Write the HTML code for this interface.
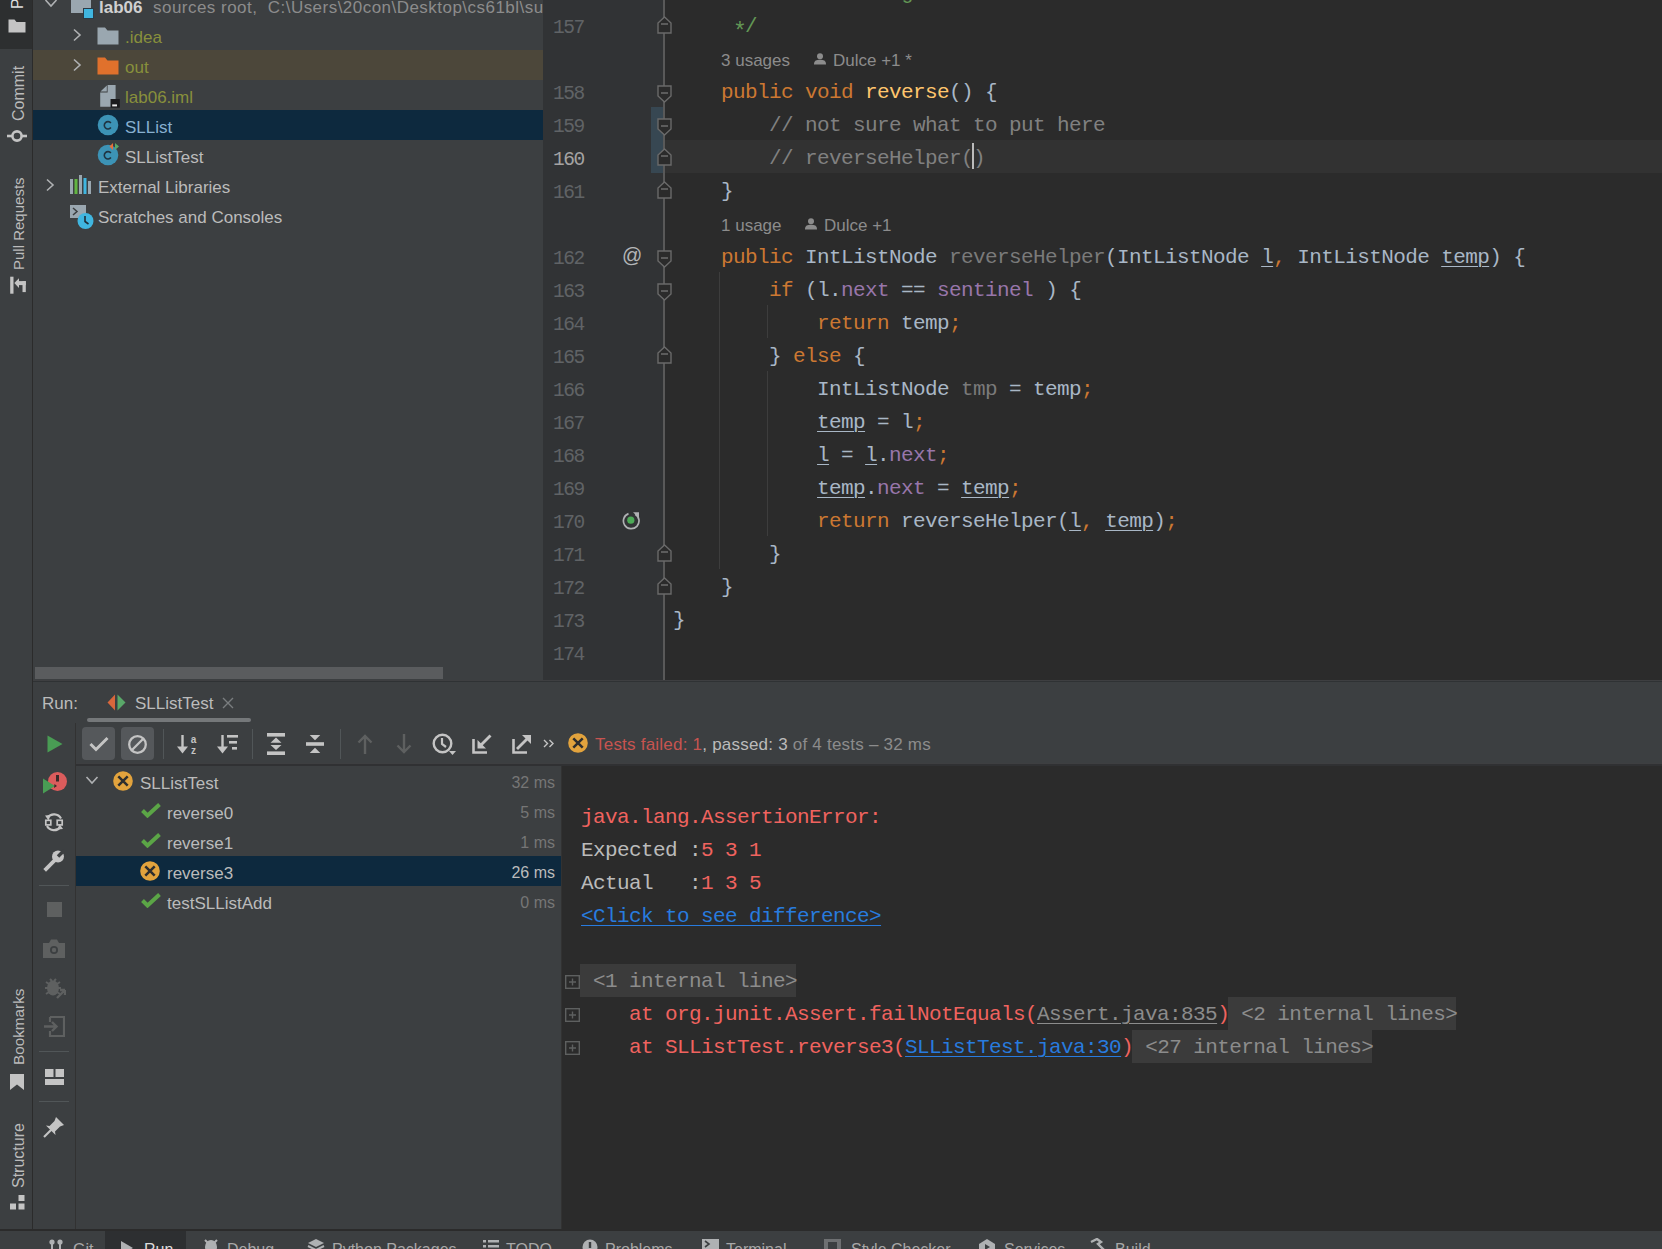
<!DOCTYPE html><html><head><meta charset="utf-8"><style>
*{margin:0;padding:0;box-sizing:border-box}
html,body{width:1662px;height:1249px;overflow:hidden;background:#3C3F41}
body{position:relative;font-family:"Liberation Sans",sans-serif;}
.abs{position:absolute}
.ui{position:absolute;font-family:"Liberation Sans",sans-serif;font-size:17px;white-space:pre;line-height:20px}
.code{position:absolute;font-family:"Liberation Mono",monospace;font-size:21px;letter-spacing:-0.6px;white-space:pre;line-height:33px;height:33px;color:#A9B7C6}
.ln{position:absolute;font-family:"Liberation Mono",monospace;font-size:19.5px;letter-spacing:-1.5px;white-space:pre;line-height:33px;color:#606366;}
.ast{position:relative;top:7px;font-size:23px;letter-spacing:-1.8px}
.u{text-decoration:underline;text-underline-offset:3px;text-decoration-thickness:1px}
.vt{position:absolute;transform-origin:0 0;transform:rotate(-90deg);font-family:"Liberation Sans",sans-serif;font-size:16px;white-space:pre;color:#BBBBBB;line-height:18px}
</style></head><body>
<div class="abs" style="left:0;top:0;width:32px;height:1229px;background:#3C3F41"></div>
<div class="abs" style="left:0;top:0;width:32px;height:49px;background:#2D2F30"></div>
<div class="abs" style="left:32px;top:0;width:1px;height:1229px;background:#2B2B2B"></div>
<div class="vt" style="left:9px;top:9px;font-size:16px;color:#DDDDDD">Project</div>
<svg class="abs" style="left:8px;top:19px" width="18" height="14" viewBox="0 0 18 14"><path d="M0.5 0.5 H6.5 L8.5 3 H17.5 V13.5 H0.5 Z" fill="#C4C4C4"/></svg>
<div class="vt" style="left:10px;top:120.5px;font-size:16px;color:#BBBBBB">Commit</div>
<svg class="abs" style="left:7px;top:129px" width="20" height="14" viewBox="0 0 20 14"><path d="M0 7 H20" stroke="#C4C4C4" stroke-width="2.6"/><circle cx="10" cy="7" r="4.6" fill="#3C3F41" stroke="#C4C4C4" stroke-width="2.6"/></svg>
<div class="vt" style="left:10px;top:269.5px;font-size:15px;color:#BBBBBB">Pull Requests</div>
<svg class="abs" style="left:10px;top:276px" width="16" height="18" viewBox="0 0 16 18"><rect x="0.2" y="0.7" width="3.3" height="17" fill="#C4C4C4"/><path d="M4.3 7.1 L9 2.3 L9 11.9 Z" fill="#C4C4C4"/><rect x="8.5" y="5.1" width="7.3" height="4" fill="#C4C4C4"/><rect x="12.5" y="5.1" width="3.3" height="11" fill="#C4C4C4"/></svg>
<div class="vt" style="left:10px;top:1065px;font-size:15.3px;color:#BBBBBB">Bookmarks</div>
<svg class="abs" style="left:10px;top:1074px" width="14" height="16" viewBox="0 0 14 16"><path d="M0 0 H14 V16 L7 10.5 L0 16 Z" fill="#C4C4C4"/></svg>
<div class="vt" style="left:10px;top:1187.5px;font-size:16px;color:#BBBBBB">Structure</div>
<svg class="abs" style="left:10px;top:1195px" width="15" height="15" viewBox="0 0 15 15"><rect x="8.5" y="0" width="6" height="6" fill="#C4C4C4"/><rect x="0" y="8.5" width="6" height="6" fill="#C4C4C4"/><rect x="8.5" y="8.5" width="6" height="6" fill="#C4C4C4"/></svg>
<div class="abs" style="left:33px;top:0;width:510px;height:680px;background:#3C3F41"></div>
<div class="abs" style="left:33px;top:50px;width:510px;height:30px;background:#4C473A"></div>
<div class="abs" style="left:33px;top:110px;width:510px;height:30px;background:#0D293E"></div>
<div class="abs" style="left:35px;top:667px;width:408px;height:12px;background:#5A5C5E"></div>
<svg class="abs" style="left:44px;top:-2px" width="14" height="10" viewBox="0 0 14 10"><path d="M1.5 2 L7 8 L12.5 2" fill="none" stroke="#AFB1B3" stroke-width="1.6"/></svg>
<div class="abs" style="left:71px;top:-3px;width:20px;height:16px;background:#9AA7B0"></div>
<div class="abs" style="left:83px;top:8px;width:11px;height:11px;background:#40B6E0;border:1.5px solid #2B3A45"></div>
<div class="ui" style="left:99px;top:-2px;color:#D0D0D0;font-weight:bold">lab06</div>
<div class="ui" style="left:153px;top:-2px;color:#8C8C8C;letter-spacing:0.47px;width:390px;overflow:hidden">sources root,  C:\Users\20con\Desktop\cs61bl\su</div>
<svg class="abs" style="left:72px;top:28px" width="10" height="14" viewBox="0 0 10 14"><path d="M2 1.5 L8 7 L2 12.5" fill="none" stroke="#AFB1B3" stroke-width="1.6"/></svg>
<svg class="abs" style="left:97px;top:27px" width="22" height="18" viewBox="0 0 22 18"><path d="M0.5 0.5 H8 L10.5 3.5 H21.5 V17.5 H0.5 Z" fill="#9AA7B0"/></svg>
<div class="ui" style="left:125px;top:28px;color:#88903C;">.idea</div>
<svg class="abs" style="left:72px;top:58px" width="10" height="14" viewBox="0 0 10 14"><path d="M2 1.5 L8 7 L2 12.5" fill="none" stroke="#AFB1B3" stroke-width="1.6"/></svg>
<svg class="abs" style="left:97px;top:57px" width="22" height="18" viewBox="0 0 22 18"><path d="M0.5 0.5 H8 L10.5 3.5 H21.5 V17.5 H0.5 Z" fill="#E0712C"/></svg>
<div class="ui" style="left:125px;top:58px;color:#88903C;">out</div>
<svg class="abs" style="left:100px;top:85px" width="21" height="23" viewBox="0 0 21 23"><path d="M0.5 6.5 L6.8 0.5 V6.5 Z" fill="#9AA7B0"/><path d="M7.6 0 H15.6 V14 H10.7 V21.7 H0.2 V7.4 H7.6 Z" fill="#9AA7B0"/><rect x="10.7" y="14" width="9.1" height="8.7" fill="#1B1B1D"/><rect x="12.2" y="19.4" width="4.8" height="2" fill="#E6E6E6"/></svg>
<div class="ui" style="left:125px;top:88px;color:#88903C;">lab06.iml</div>
<svg class="abs" style="left:97px;top:114px" width="24" height="22" viewBox="0 0 24 22"><circle cx="11" cy="11" r="10.3" fill="#3C93B6"/><path d="M13.9 9 A3.7 3.7 0 1 0 13.9 13.6" fill="none" stroke="#1F3442" stroke-width="1.6"/></svg>
<div class="ui" style="left:125px;top:118px;color:#88B0D0;">SLList</div>
<svg class="abs" style="left:97px;top:140px" width="24" height="26" viewBox="0 -4 24 26"><circle cx="11" cy="11" r="10.3" fill="#3C93B6"/><path d="M13.9 9 A3.7 3.7 0 1 0 13.9 13.6" fill="none" stroke="#1F3442" stroke-width="1.6"/><path d="M16 -1 L16 6 L12.5 2.5 Z" fill="#E8703A"/><path d="M18 -1 L18 6 L22 2.5 Z" fill="#59A869"/></svg>
<div class="ui" style="left:125px;top:148px;color:#BBBBBB;">SLListTest</div>
<svg class="abs" style="left:45px;top:178px" width="10" height="14" viewBox="0 0 10 14"><path d="M2 1.5 L8 7 L2 12.5" fill="none" stroke="#AFB1B3" stroke-width="1.6"/></svg>
<svg class="abs" style="left:70px;top:175px" width="22" height="19" viewBox="0 0 22 19"><rect x="0" y="4" width="3" height="15" fill="#9AA7B0"/><rect x="4.5" y="4" width="3" height="15" fill="#62B543"/><rect x="9" y="0" width="3" height="19" fill="#9AA7B0"/><rect x="13.5" y="3" width="3" height="16" fill="#40B6E0"/><rect x="18" y="6" width="3" height="13" fill="#9AA7B0"/></svg>
<div class="ui" style="left:98px;top:178px;color:#BBBBBB;">External Libraries</div>
<svg class="abs" style="left:70px;top:205px" width="24" height="25" viewBox="0 0 24 25"><rect x="0" y="0" width="16" height="13" fill="#9AA7B0"/><path d="M3 3 L7 6.5 L3 10" fill="none" stroke="#3C3F41" stroke-width="1.5"/><circle cx="15.5" cy="16" r="8" fill="#40B6E0"/><path d="M15 11 L15 16.5 L18.5 19" fill="none" stroke="#1E2E38" stroke-width="1.6"/></svg>
<div class="ui" style="left:98px;top:208px;color:#BBBBBB;">Scratches and Consoles</div>
<div class="abs" style="left:543px;top:0;width:121px;height:680px;background:#313335"></div>
<div class="abs" style="left:664px;top:0;width:998px;height:680px;background:#2B2B2B"></div>
<div class="abs" style="left:664px;top:140px;width:998px;height:33px;background:#323232"></div>
<div class="abs" style="left:651px;top:107px;width:12px;height:66px;background:#374752"></div>
<div class="code" style="left:673px;top:-23px"><span style="color:#629755" class="">                   g</span></div>
<div class="ln" style="left:553px;top:12px;color:#606366">157</div>
<div class="code" style="left:673px;top:10px"><span style="color:#629755" class="">     </span><span style="color:#629755" class="ast">*</span><span style="color:#629755" class="">/</span></div>
<div class="ln" style="left:553px;top:78px;color:#606366">158</div>
<div class="code" style="left:673px;top:76px"><span style="color:#A9B7C6" class="">    </span><span style="color:#CC7832" class="">public</span><span style="color:#A9B7C6" class=""> </span><span style="color:#CC7832" class="">void</span><span style="color:#A9B7C6" class=""> </span><span style="color:#FFC66D" class="">reverse</span><span style="color:#A9B7C6" class="">() {</span></div>
<div class="ln" style="left:553px;top:111px;color:#606366">159</div>
<div class="code" style="left:673px;top:109px"><span style="color:#808080" class="">        // not sure what to put here</span></div>
<div class="ln" style="left:553px;top:144px;color:#A4A3A3">160</div>
<div class="code" style="left:673px;top:142px"><span style="color:#808080" class="">        // reverseHelper()</span></div>
<div class="ln" style="left:553px;top:177px;color:#606366">161</div>
<div class="code" style="left:673px;top:175px"><span style="color:#A9B7C6" class="">    }</span></div>
<div class="ln" style="left:553px;top:243px;color:#606366">162</div>
<div class="code" style="left:673px;top:241px"><span style="color:#A9B7C6" class="">    </span><span style="color:#CC7832" class="">public</span><span style="color:#A9B7C6" class=""> IntListNode </span><span style="color:#7A7A7A" class="">reverseHelper</span><span style="color:#A9B7C6" class="">(IntListNode </span><span style="color:#A9B7C6" class="u">l</span><span style="color:#CC7832" class="">,</span><span style="color:#A9B7C6" class=""> IntListNode </span><span style="color:#A9B7C6" class="u">temp</span><span style="color:#A9B7C6" class="">) {</span></div>
<div class="ln" style="left:553px;top:276px;color:#606366">163</div>
<div class="code" style="left:673px;top:274px"><span style="color:#A9B7C6" class="">        </span><span style="color:#CC7832" class="">if</span><span style="color:#A9B7C6" class=""> (l.</span><span style="color:#9876AA" class="">next</span><span style="color:#A9B7C6" class=""> == </span><span style="color:#9876AA" class="">sentinel</span><span style="color:#A9B7C6" class=""> ) {</span></div>
<div class="ln" style="left:553px;top:309px;color:#606366">164</div>
<div class="code" style="left:673px;top:307px"><span style="color:#A9B7C6" class="">            </span><span style="color:#CC7832" class="">return</span><span style="color:#A9B7C6" class=""> temp</span><span style="color:#CC7832" class="">;</span></div>
<div class="ln" style="left:553px;top:342px;color:#606366">165</div>
<div class="code" style="left:673px;top:340px"><span style="color:#A9B7C6" class="">        } </span><span style="color:#CC7832" class="">else</span><span style="color:#A9B7C6" class=""> {</span></div>
<div class="ln" style="left:553px;top:375px;color:#606366">166</div>
<div class="code" style="left:673px;top:373px"><span style="color:#A9B7C6" class="">            IntListNode </span><span style="color:#7A7A7A" class="">tmp</span><span style="color:#A9B7C6" class=""> = temp</span><span style="color:#CC7832" class="">;</span></div>
<div class="ln" style="left:553px;top:408px;color:#606366">167</div>
<div class="code" style="left:673px;top:406px"><span style="color:#A9B7C6" class="">            </span><span style="color:#A9B7C6" class="u">temp</span><span style="color:#A9B7C6" class=""> = l</span><span style="color:#CC7832" class="">;</span></div>
<div class="ln" style="left:553px;top:441px;color:#606366">168</div>
<div class="code" style="left:673px;top:439px"><span style="color:#A9B7C6" class="">            </span><span style="color:#A9B7C6" class="u">l</span><span style="color:#A9B7C6" class=""> = </span><span style="color:#A9B7C6" class="u">l</span><span style="color:#A9B7C6" class="">.</span><span style="color:#9876AA" class="">next</span><span style="color:#CC7832" class="">;</span></div>
<div class="ln" style="left:553px;top:474px;color:#606366">169</div>
<div class="code" style="left:673px;top:472px"><span style="color:#A9B7C6" class="">            </span><span style="color:#A9B7C6" class="u">temp</span><span style="color:#A9B7C6" class="">.</span><span style="color:#9876AA" class="">next</span><span style="color:#A9B7C6" class=""> = </span><span style="color:#A9B7C6" class="u">temp</span><span style="color:#CC7832" class="">;</span></div>
<div class="ln" style="left:553px;top:507px;color:#606366">170</div>
<div class="code" style="left:673px;top:505px"><span style="color:#A9B7C6" class="">            </span><span style="color:#CC7832" class="">return</span><span style="color:#A9B7C6" class=""> reverseHelper(</span><span style="color:#A9B7C6" class="u">l</span><span style="color:#CC7832" class="">,</span><span style="color:#A9B7C6" class=""> </span><span style="color:#A9B7C6" class="u">temp</span><span style="color:#A9B7C6" class="">)</span><span style="color:#CC7832" class="">;</span></div>
<div class="ln" style="left:553px;top:540px;color:#606366">171</div>
<div class="code" style="left:673px;top:538px"><span style="color:#A9B7C6" class="">        }</span></div>
<div class="ln" style="left:553px;top:573px;color:#606366">172</div>
<div class="code" style="left:673px;top:571px"><span style="color:#A9B7C6" class="">    }</span></div>
<div class="ln" style="left:553px;top:606px;color:#606366">173</div>
<div class="code" style="left:673px;top:604px"><span style="color:#A9B7C6" class="">}</span></div>
<div class="ln" style="left:553px;top:639px;color:#606366">174</div>
<div class="code" style="left:673px;top:637px"></div>
<div class="ui" style="left:721px;top:51px;color:#8C8C8C;font-size:17px">3 usages</div>
<svg class="abs" style="left:813px;top:53px" width="14" height="12" viewBox="0 0 14 12"><circle cx="7" cy="3.2" r="3" fill="#8C8C8C"/><path d="M1 11.5 C1 7.5 3.5 6.8 7 6.8 C10.5 6.8 13 7.5 13 11.5 Z" fill="#8C8C8C"/></svg>
<div class="ui" style="left:833px;top:51px;color:#8C8C8C;font-size:17px">Dulce +1 *</div>
<div class="ui" style="left:721px;top:216px;color:#8C8C8C;font-size:17px">1 usage</div>
<svg class="abs" style="left:804px;top:218px" width="14" height="12" viewBox="0 0 14 12"><circle cx="7" cy="3.2" r="3" fill="#8C8C8C"/><path d="M1 11.5 C1 7.5 3.5 6.8 7 6.8 C10.5 6.8 13 7.5 13 11.5 Z" fill="#8C8C8C"/></svg>
<div class="ui" style="left:824px;top:216px;color:#8C8C8C;font-size:17px">Dulce +1</div>
<div class="abs" style="left:972px;top:143px;width:2px;height:26px;background:#BBBBBB"></div>
<div class="abs" style="left:663px;top:0;width:2px;height:680px;background:#595959"></div>
<div class="abs" style="left:719px;top:272px;width:1px;height:297px;background:#3D3D3D"></div>
<div class="abs" style="left:767px;top:305px;width:1px;height:33px;background:#3D3D3D"></div>
<div class="abs" style="left:767px;top:371px;width:1px;height:165px;background:#3D3D3D"></div>
<svg class="abs" style="left:657px;top:16px" width="15" height="18" viewBox="0 0 15 18"><path d="M1 17 H14 V7 L7.5 1 L1 7 Z" fill="#2B2B2B" stroke="#6A6A6A" stroke-width="1.4"/><path d="M4 8 H11" stroke="#6A6A6A" stroke-width="1.6"/></svg>
<svg class="abs" style="left:657px;top:85px" width="15" height="18" viewBox="0 0 15 18"><path d="M1 1 H14 V11 L7.5 17 L1 11 Z" fill="#2B2B2B" stroke="#6A6A6A" stroke-width="1.4"/><path d="M4 8 H11" stroke="#6A6A6A" stroke-width="1.6"/></svg>
<svg class="abs" style="left:657px;top:118px" width="15" height="18" viewBox="0 0 15 18"><path d="M1 1 H14 V11 L7.5 17 L1 11 Z" fill="#2B2B2B" stroke="#6A6A6A" stroke-width="1.4"/><path d="M4 8 H11" stroke="#6A6A6A" stroke-width="1.6"/></svg>
<svg class="abs" style="left:657px;top:148px" width="15" height="18" viewBox="0 0 15 18"><path d="M1 17 H14 V7 L7.5 1 L1 7 Z" fill="#2B2B2B" stroke="#6A6A6A" stroke-width="1.4"/><path d="M4 8 H11" stroke="#6A6A6A" stroke-width="1.6"/></svg>
<svg class="abs" style="left:657px;top:181px" width="15" height="18" viewBox="0 0 15 18"><path d="M1 17 H14 V7 L7.5 1 L1 7 Z" fill="#2B2B2B" stroke="#6A6A6A" stroke-width="1.4"/><path d="M4 8 H11" stroke="#6A6A6A" stroke-width="1.6"/></svg>
<svg class="abs" style="left:657px;top:250px" width="15" height="18" viewBox="0 0 15 18"><path d="M1 1 H14 V11 L7.5 17 L1 11 Z" fill="#2B2B2B" stroke="#6A6A6A" stroke-width="1.4"/><path d="M4 8 H11" stroke="#6A6A6A" stroke-width="1.6"/></svg>
<svg class="abs" style="left:657px;top:283px" width="15" height="18" viewBox="0 0 15 18"><path d="M1 1 H14 V11 L7.5 17 L1 11 Z" fill="#2B2B2B" stroke="#6A6A6A" stroke-width="1.4"/><path d="M4 8 H11" stroke="#6A6A6A" stroke-width="1.6"/></svg>
<svg class="abs" style="left:657px;top:346px" width="15" height="18" viewBox="0 0 15 18"><path d="M1 17 H14 V7 L7.5 1 L1 7 Z" fill="#2B2B2B" stroke="#6A6A6A" stroke-width="1.4"/><path d="M4 8 H11" stroke="#6A6A6A" stroke-width="1.6"/></svg>
<svg class="abs" style="left:657px;top:544px" width="15" height="18" viewBox="0 0 15 18"><path d="M1 17 H14 V7 L7.5 1 L1 7 Z" fill="#2B2B2B" stroke="#6A6A6A" stroke-width="1.4"/><path d="M4 8 H11" stroke="#6A6A6A" stroke-width="1.6"/></svg>
<svg class="abs" style="left:657px;top:577px" width="15" height="18" viewBox="0 0 15 18"><path d="M1 17 H14 V7 L7.5 1 L1 7 Z" fill="#2B2B2B" stroke="#6A6A6A" stroke-width="1.4"/><path d="M4 8 H11" stroke="#6A6A6A" stroke-width="1.6"/></svg>
<div class="ui" style="left:622px;top:245px;color:#B4B6B8;font-size:20px">@</div>
<svg class="abs" style="left:622px;top:511px" width="20" height="20" viewBox="0 0 20 20"><path d="M13.2 3.2 A7.8 7.8 0 1 1 6.5 2.6" fill="none" stroke="#AFB1B3" stroke-width="1.7"/><path d="M11 1.2 L17 1.2 L17 7 Z" fill="#AFB1B3"/><circle cx="8.8" cy="9.2" r="3.6" fill="#4DAA57"/></svg>
<div class="abs" style="left:33px;top:680px;width:1629px;height:1px;background:#3E3F41"></div>
<div class="abs" style="left:33px;top:681px;width:1629px;height:1px;background:#2F3234"></div>
<div class="abs" style="left:33px;top:682px;width:1629px;height:547px;background:#3C3F41"></div>
<div class="abs" style="left:561px;top:766px;width:1101px;height:463px;background:#2B2B2B"></div>
<div class="ui" style="left:42px;top:694px;color:#BBBBBB">Run:</div>
<svg class="abs" style="left:107px;top:694px" width="19" height="17" viewBox="0 0 19 17"><path d="M8 0.5 L8 16.5 L0.5 8.5 Z" fill="#D9673C"/><path d="M10.5 0.5 L10.5 16.5 L18.5 8.5 Z" fill="#59A869"/></svg>
<div class="ui" style="left:135px;top:694px;color:#BBBBBB">SLListTest</div>
<svg class="abs" style="left:222px;top:697px" width="12" height="12" viewBox="0 0 12 12"><path d="M1 1 L11 11 M11 1 L1 11" stroke="#7A7D7F" stroke-width="1.4"/></svg>
<div class="abs" style="left:87px;top:718px;width:164px;height:4px;border-radius:2px;background:#75787A"></div>
<div class="abs" style="left:76px;top:763px;width:1586px;height:1px;background:#3E3F41"></div>
<div class="abs" style="left:76px;top:764px;width:1586px;height:2px;background:#303133"></div>
<div class="abs" style="left:75px;top:723px;width:1px;height:506px;background:#323232"></div>
<svg class="abs" style="left:47px;top:735px" width="16" height="18" viewBox="0 0 16 18"><path d="M0.5 0.5 L15.5 9 L0.5 17.5 Z" fill="#499C54"/></svg>
<svg class="abs" style="left:42px;top:771px" width="26" height="24" viewBox="0 0 26 24"><circle cx="15.5" cy="10.5" r="9.5" fill="#DB5C5C"/><rect x="14" y="4" width="3" height="6.5" fill="#3A2A2A"/><path d="M1 7.5 L13 15 L1 22.5 Z" fill="#499C54" stroke="#3C3F41" stroke-width="0"/><path d="M12.5 13 L15 15 L12 17 Z" fill="#3A2A2A"/></svg>
<svg class="abs" style="left:44px;top:811px" width="20" height="23" viewBox="0 0 20 23"><path d="M3.6 6.5 A8 8 0 0 1 17 7.5" fill="none" stroke="#C4C4C4" stroke-width="2.2"/><path d="M1 4.5 L6.5 4 L4.5 9.5 Z" fill="#C4C4C4"/><path d="M16.4 16 A8 8 0 0 1 3 15" fill="none" stroke="#C4C4C4" stroke-width="2.2"/><path d="M19 18 L13.5 18.5 L15.5 13 Z" fill="#C4C4C4"/><rect x="1.8" y="9.3" width="5" height="4.6" fill="none" stroke="#C4C4C4" stroke-width="1.7"/><rect x="13.2" y="9.3" width="5" height="4.6" fill="none" stroke="#C4C4C4" stroke-width="1.7"/></svg>
<svg class="abs" style="left:43px;top:849px" width="22" height="23" viewBox="0 0 22 23"><path d="M3 20 L12 11" stroke="#C4C4C4" stroke-width="3.8" stroke-linecap="square"/><circle cx="15" cy="7.5" r="6" fill="#C4C4C4"/><path d="M15 7.5 L22 0.5" stroke="#3C3F41" stroke-width="3.4"/></svg>
<div class="abs" style="left:39px;top:885px;width:30px;height:1px;background:#515658"></div>
<div class="abs" style="left:47px;top:902px;width:15px;height:15px;background:#5E6060"></div>
<svg class="abs" style="left:43px;top:939px" width="22" height="19" viewBox="0 0 22 19"><path d="M0 4 H6 L8 0.5 H14 L16 4 H22 V19 H0 Z" fill="#5E6060"/><circle cx="11" cy="11" r="4" fill="#3C3F41"/><circle cx="11" cy="11" r="2.2" fill="#5E6060"/></svg>
<svg class="abs" style="left:44px;top:976px" width="22" height="23" viewBox="0 0 22 23"><ellipse cx="9" cy="12" rx="6" ry="7.5" fill="#5E6060"/><path d="M2 6 L5 8 M16 6 L13 8 M1 12 H4 M14 12 H17 M2 18 L5 16 M16 18 L13 16 M6 3 L8 5 M12 3 L10 5" stroke="#5E6060" stroke-width="2"/><path d="M13 22 L21 14 M21 14 H16 M21 14 V19" stroke="#5E6060" stroke-width="2.4"/></svg>
<svg class="abs" style="left:44px;top:1016px" width="21" height="21" viewBox="0 0 21 21"><path d="M6 1 H20 V20 H6 V15 M6 6 V1" fill="none" stroke="#5E6060" stroke-width="2.2"/><path d="M0 10.5 H12 M8 6 L12.5 10.5 L8 15" fill="none" stroke="#5E6060" stroke-width="2.4"/></svg>
<div class="abs" style="left:39px;top:1051px;width:30px;height:1px;background:#515658"></div>
<svg class="abs" style="left:45px;top:1069px" width="19" height="16" viewBox="0 0 19 16"><rect x="0" y="0" width="8.5" height="8" fill="#C4C4C4"/><rect x="10.5" y="0" width="8.5" height="8" fill="#C4C4C4"/><rect x="0" y="10" width="19" height="6" fill="#C4C4C4"/></svg>
<div class="abs" style="left:39px;top:1101px;width:30px;height:1px;background:#515658"></div>
<svg class="abs" style="left:43px;top:1116px" width="22" height="22" viewBox="0 0 22 22"><path d="M1 21 L9 13" stroke="#C4C4C4" stroke-width="2.2"/><path d="M13 1 L21 9 L17 10.5 L12 15.5 L12.5 19 L3 9.5 L6.5 10 L11.5 5 Z" fill="#C4C4C4"/></svg>
<div class="abs" style="left:82px;top:727px;width:33px;height:33px;border-radius:4px;background:#55585B"></div>
<div class="abs" style="left:121px;top:727px;width:33px;height:33px;border-radius:4px;background:#55585B"></div>
<svg class="abs" style="left:89px;top:736px" width="20" height="16" viewBox="0 0 20 16"><path d="M1.5 8 L7 13.5 L18.5 2" fill="none" stroke="#C4C4C4" stroke-width="3"/></svg>
<svg class="abs" style="left:127px;top:734px" width="21" height="21" viewBox="0 0 21 21"><circle cx="10.5" cy="10.5" r="8.3" fill="none" stroke="#C4C4C4" stroke-width="2.3"/><path d="M5 16 L16 5" stroke="#C4C4C4" stroke-width="2.3"/></svg>
<div class="abs" style="left:163px;top:729px;width:1px;height:30px;background:#515658"></div>
<div class="abs" style="left:252px;top:729px;width:1px;height:30px;background:#515658"></div>
<div class="abs" style="left:340px;top:729px;width:1px;height:30px;background:#515658"></div>
<svg class="abs" style="left:177px;top:735px" width="22" height="19" viewBox="0 0 22 19"><path d="M5.5 0 V15" stroke="#C4C4C4" stroke-width="2.4"/><path d="M0 11.5 L5.5 18.5 L11 11.5 Z" fill="#C4C4C4"/><text x="16.5" y="8" font-family="Liberation Sans" font-weight="bold" font-size="10" fill="#C4C4C4" text-anchor="middle">a</text><text x="16.5" y="18.5" font-family="Liberation Sans" font-weight="bold" font-size="10" fill="#C4C4C4" text-anchor="middle">z</text></svg>
<svg class="abs" style="left:217px;top:735px" width="22" height="19" viewBox="0 0 22 19"><path d="M5.5 0 V15" stroke="#C4C4C4" stroke-width="2.4"/><path d="M0 11.5 L5.5 18.5 L11 11.5 Z" fill="#C4C4C4"/><rect x="10" y="0" width="11" height="2.6" fill="#C4C4C4"/><rect x="12" y="6" width="8" height="2.6" fill="#C4C4C4"/><rect x="15" y="12" width="5" height="2.6" fill="#C4C4C4"/></svg>
<svg class="abs" style="left:267px;top:733px" width="18" height="22" viewBox="0 0 18 22"><rect x="0" y="0" width="18" height="3.6" fill="#C4C4C4"/><rect x="0" y="18.4" width="18" height="3.6" fill="#C4C4C4"/><path d="M3.5 9.7 L9 4.6 L14.5 9.7 Z M3.5 12 L9 17 L14.5 12 Z" fill="#C4C4C4"/></svg>
<svg class="abs" style="left:306px;top:734px" width="18" height="20" viewBox="0 0 18 20"><rect x="0" y="8.2" width="18" height="3.6" fill="#C4C4C4"/><path d="M3.7 1 L9 6.2 L14.3 1 Z M3.7 19 L9 13.8 L14.3 19 Z" fill="#C4C4C4"/></svg>
<svg class="abs" style="left:357px;top:734px" width="16" height="20" viewBox="0 0 16 20"><path d="M8 2 V20 M1.5 8.5 L8 2 L14.5 8.5" fill="none" stroke="#5E6060" stroke-width="2.4"/></svg>
<svg class="abs" style="left:396px;top:734px" width="16" height="20" viewBox="0 0 16 20"><path d="M8 0 V18 M1.5 11.5 L8 18 L14.5 11.5" fill="none" stroke="#5E6060" stroke-width="2.4"/></svg>
<svg class="abs" style="left:432px;top:733px" width="25" height="24" viewBox="0 0 25 24"><circle cx="10.5" cy="10.5" r="8.8" fill="none" stroke="#C4C4C4" stroke-width="2.4"/><path d="M10 5 V11 L14 14" fill="none" stroke="#C4C4C4" stroke-width="2.2"/><path d="M17 18 H24 L20.5 22 Z" fill="#C4C4C4"/></svg>
<svg class="abs" style="left:472px;top:734px" width="20" height="20" viewBox="0 0 20 20"><path d="M1.5 5 V18.5 H15" fill="none" stroke="#C4C4C4" stroke-width="2.6"/><path d="M18.5 1.5 L8 12" stroke="#C4C4C4" stroke-width="2.8"/><path d="M5.5 6 V14.5 H14 Z" fill="#C4C4C4"/></svg>
<svg class="abs" style="left:512px;top:734px" width="20" height="20" viewBox="0 0 20 20"><path d="M1.5 5 V18.5 H15" fill="none" stroke="#C4C4C4" stroke-width="2.6"/><path d="M5 15 L15 5" stroke="#C4C4C4" stroke-width="2.8"/><path d="M10 1 H19 V10 Z" fill="#C4C4C4"/></svg>
<svg class="abs" style="left:543px;top:739px" width="12" height="9" viewBox="0 0 12 9"><path d="M1 1 L4.5 4.5 L1 8 M6.5 1 L10 4.5 L6.5 8" fill="none" stroke="#C4C4C4" stroke-width="1.4"/></svg>
<svg class="abs" style="left:568px;top:733px" width="20" height="20" viewBox="0 0 20 20"><circle cx="10" cy="10" r="9.8" fill="#E2A33D"/><path d="M5.3 5.3 L14.7 14.7 M14.7 5.3 L5.3 14.7" stroke="#2E2E2E" stroke-width="2.5"/></svg>
<div class="ui" style="left:595px;top:735px;color:#C75450;letter-spacing:0.22px">Tests failed: 1<span style="color:#BBBBBB">, passed: 3</span><span style="color:#8C8C8C"> of 4 tests &#8211; 32 ms</span></div>
<div class="abs" style="left:76px;top:856px;width:485px;height:30px;background:#0D293E"></div>
<svg class="abs" style="left:85px;top:775px" width="14" height="10" viewBox="0 0 14 10"><path d="M1.5 2 L7 8 L12.5 2" fill="none" stroke="#AFB1B3" stroke-width="1.6"/></svg>
<svg class="abs" style="left:113px;top:771px" width="20" height="20" viewBox="0 0 20 20"><circle cx="10" cy="10" r="9.8" fill="#E2A33D"/><path d="M5.3 5.3 L14.7 14.7 M14.7 5.3 L5.3 14.7" stroke="#2E2E2E" stroke-width="2.5"/></svg>
<div class="ui" style="left:140px;top:774px;color:#BBBBBB;">SLListTest</div>
<svg class="abs" style="left:141px;top:803px" width="20" height="15" viewBox="0 0 20 15"><path d="M1.5 7.5 L6.5 12.5 L18.5 1.5" fill="none" stroke="#5BA546" stroke-width="4"/></svg>
<div class="ui" style="left:167px;top:804px;color:#BBBBBB;">reverse0</div>
<svg class="abs" style="left:141px;top:833px" width="20" height="15" viewBox="0 0 20 15"><path d="M1.5 7.5 L6.5 12.5 L18.5 1.5" fill="none" stroke="#5BA546" stroke-width="4"/></svg>
<div class="ui" style="left:167px;top:834px;color:#BBBBBB;">reverse1</div>
<svg class="abs" style="left:141px;top:893px" width="20" height="15" viewBox="0 0 20 15"><path d="M1.5 7.5 L6.5 12.5 L18.5 1.5" fill="none" stroke="#5BA546" stroke-width="4"/></svg>
<div class="ui" style="left:167px;top:894px;color:#BBBBBB;">testSLListAdd</div>
<svg class="abs" style="left:140px;top:861px" width="20" height="20" viewBox="0 0 20 20"><circle cx="10" cy="10" r="9.8" fill="#E2A33D"/><path d="M5.3 5.3 L14.7 14.7 M14.7 5.3 L5.3 14.7" stroke="#2E2E2E" stroke-width="2.5"/></svg>
<div class="ui" style="left:167px;top:864px;color:#BBBBBB;">reverse3</div>
<div class="ui" style="right:1107px;top:773px;color:#767676;font-size:16px">32 ms</div>
<div class="ui" style="right:1107px;top:803px;color:#767676;font-size:16px">5 ms</div>
<div class="ui" style="right:1107px;top:833px;color:#767676;font-size:16px">1 ms</div>
<div class="ui" style="right:1107px;top:863px;color:#BBBBBB;font-size:16px">26 ms</div>
<div class="ui" style="right:1107px;top:893px;color:#767676;font-size:16px">0 ms</div>
<div class="abs" style="left:0;top:1229px;width:1662px;height:2px;background:#2B2B2B"></div>
<div class="abs" style="left:0;top:1231px;width:1662px;height:18px;background:#3C3F41"></div>
<div class="abs" style="left:580px;top:964px;width:216px;height:33px;background:#3B3B3B"></div>
<div class="abs" style="left:1228px;top:997px;width:228px;height:33px;background:#3B3B3B"></div>
<div class="abs" style="left:1132px;top:1030px;width:240px;height:33px;background:#3B3B3B"></div>
<div class="code" style="left:581px;top:801px"><span style="color:#F0635F" class="">java.lang.AssertionError:</span></div>
<div class="code" style="left:581px;top:834px"><span style="color:#BBBBBB" class="">Expected :</span><span style="color:#F0635F" class="">5 3 1</span></div>
<div class="code" style="left:581px;top:867px"><span style="color:#BBBBBB" class="">Actual   :</span><span style="color:#F0635F" class="">1 3 5</span></div>
<div class="code" style="left:581px;top:900px"><span style="color:#287BDE" class="u">&lt;Click to see difference&gt;</span></div>
<div class="code" style="left:581px;top:965px"><span style="color:#8C8C8C" class=""> &lt;1 internal line&gt;</span></div>
<div class="code" style="left:581px;top:998px"><span style="color:#F0635F" class="">    at org.junit.Assert.failNotEquals(</span><span style="color:#8C8C8C" class="u">Assert.java:835</span><span style="color:#F0635F" class="">)</span><span style="color:#8C8C8C" class=""> &lt;2 internal lines&gt;</span></div>
<div class="code" style="left:581px;top:1031px"><span style="color:#F0635F" class="">    at SLListTest.reverse3(</span><span style="color:#287BDE" class="u">SLListTest.java:30</span><span style="color:#F0635F" class="">)</span><span style="color:#8C8C8C" class=""> &lt;27 internal lines&gt;</span></div>
<svg class="abs" style="left:565px;top:975px" width="15" height="14" viewBox="0 0 15 14"><rect x="0.7" y="0.7" width="13.6" height="12.6" fill="none" stroke="#5E6060" stroke-width="1.4"/><path d="M7.5 3.5 V10.5 M4 7 H11" stroke="#5E6060" stroke-width="1.4"/></svg>
<svg class="abs" style="left:565px;top:1008px" width="15" height="14" viewBox="0 0 15 14"><rect x="0.7" y="0.7" width="13.6" height="12.6" fill="none" stroke="#5E6060" stroke-width="1.4"/><path d="M7.5 3.5 V10.5 M4 7 H11" stroke="#5E6060" stroke-width="1.4"/></svg>
<svg class="abs" style="left:565px;top:1041px" width="15" height="14" viewBox="0 0 15 14"><rect x="0.7" y="0.7" width="13.6" height="12.6" fill="none" stroke="#5E6060" stroke-width="1.4"/><path d="M7.5 3.5 V10.5 M4 7 H11" stroke="#5E6060" stroke-width="1.4"/></svg>
<div class="abs" style="left:561px;top:766px;width:1px;height:463px;background:#323232"></div>
<div class="abs" style="left:105px;top:1231px;width:81px;height:18px;background:#2D2F31"></div>
<div class="ui" style="left:73px;top:1240px;color:#A8A8A8;font-size:16px">Git</div>
<div class="ui" style="left:144px;top:1240px;color:#DDDDDD;font-size:16px">Run</div>
<div class="ui" style="left:227px;top:1240px;color:#A8A8A8;font-size:16px">Debug</div>
<div class="ui" style="left:332px;top:1240px;color:#A8A8A8;font-size:16px">Python Packages</div>
<div class="ui" style="left:506px;top:1240px;color:#A8A8A8;font-size:16px">TODO</div>
<div class="ui" style="left:605px;top:1240px;color:#A8A8A8;font-size:16px">Problems</div>
<div class="ui" style="left:726px;top:1240px;color:#A8A8A8;font-size:16px">Terminal</div>
<div class="ui" style="left:851px;top:1240px;color:#A8A8A8;font-size:16px">Style Checker</div>
<div class="ui" style="left:1004px;top:1240px;color:#A8A8A8;font-size:16px">Services</div>
<div class="ui" style="left:1115px;top:1240px;color:#A8A8A8;font-size:16px">Build</div>
<svg class="abs" style="left:49px;top:1239px" width="14" height="10"><circle cx="3" cy="3" r="2.6" fill="#AFB1B3"/><circle cx="11" cy="3" r="2.6" fill="#AFB1B3"/><path d="M3 3 V10 M11 3 V10" stroke="#AFB1B3" stroke-width="2"/></svg>
<svg class="abs" style="left:120px;top:1241px" width="14" height="8"><path d="M1 0 L13 7 L1 14 Z" fill="#AFB1B3"/></svg>
<svg class="abs" style="left:203px;top:1238px" width="16" height="11"><ellipse cx="8" cy="9" rx="6" ry="7" fill="#AFB1B3"/><path d="M2 2 L5 5 M14 2 L11 5" stroke="#AFB1B3" stroke-width="2"/></svg>
<svg class="abs" style="left:307px;top:1238px" width="18" height="11"><path d="M9 1 L17 5 L9 9 L1 5 Z" fill="#AFB1B3"/><path d="M1 8 L9 12 L17 8" fill="none" stroke="#AFB1B3" stroke-width="2"/></svg>
<svg class="abs" style="left:483px;top:1240px" width="16" height="9"><rect x="0" y="0" width="3" height="2.5" fill="#AFB1B3"/><rect x="5" y="0" width="11" height="2.5" fill="#AFB1B3"/><rect x="0" y="5" width="3" height="2.5" fill="#AFB1B3"/><rect x="5" y="5" width="11" height="2.5" fill="#AFB1B3"/></svg>
<svg class="abs" style="left:582px;top:1239px" width="16" height="10"><circle cx="8" cy="8" r="7.5" fill="#AFB1B3"/><rect x="6.8" y="3" width="2.4" height="6" fill="#3C3F41"/></svg>
<svg class="abs" style="left:702px;top:1239px" width="17" height="10"><rect x="0" y="0" width="17" height="14" fill="#AFB1B3"/><path d="M3 2 L7 5 L3 8" fill="none" stroke="#3C3F41" stroke-width="1.6"/></svg>
<svg class="abs" style="left:824px;top:1239px" width="17" height="10"><rect x="0" y="0" width="17" height="14" fill="#6E7072"/><rect x="4" y="3" width="9" height="8" fill="#3C3F41"/></svg>
<svg class="abs" style="left:978px;top:1239px" width="18" height="10"><path d="M9 0 L17 5 L17 14 L1 14 L1 5 Z" fill="#AFB1B3"/><path d="M7 5 L12 8 L7 11 Z" fill="#3C3F41"/></svg>
<svg class="abs" style="left:1089px;top:1238px" width="18" height="11"><path d="M2 4 L8 1 L12 4 L9 6 L15 12" fill="none" stroke="#AFB1B3" stroke-width="2.4"/></svg>
</body></html>
